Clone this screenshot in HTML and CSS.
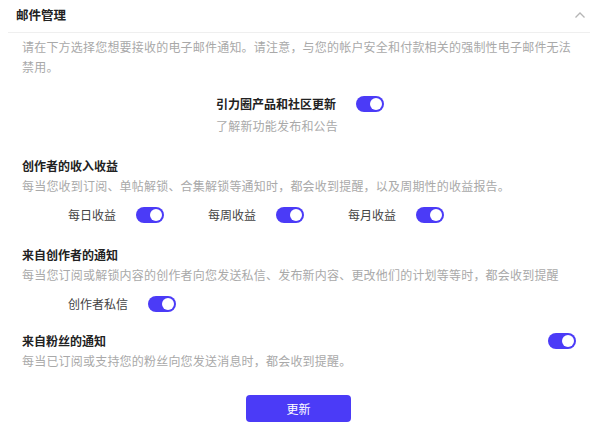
FILE: index.html
```html
<!DOCTYPE html>
<html lang="zh-CN">
<head>
  <meta charset="UTF-8" />
  <title>邮件管理</title>
  <link rel="stylesheet" href="styles.css">
</head>
<body>
  <div class="panel">
    <div class="panel-head">
      <span class="panel-title">邮件管理</span>
      <svg class="chevron" width="12" height="8" viewBox="0 0 12 8">
        <path d="M1.5 6.5 L6 2 L10.5 6.5" fill="none" stroke="#b5b5b5" stroke-width="1.3"/>
      </svg>
    </div>

    <div class="panel-body">
      <p class="desc intro">请在下方选择您想要接收的电子邮件通知。请注意，与您的帐户安全和付款相关的强制性电子邮件无法禁用。</p>

      <div class="featured">
        <div class="featured-text">
          <div class="heading">引力圈产品和社区更新</div>
          <div class="desc">了解新功能发布和公告</div>
        </div>
        <span class="switch on"><span class="knob"></span></span>
      </div>

      <div class="section">
        <div class="heading">创作者的收入收益</div>
        <p class="desc">每当您收到订阅、单帖解锁、合集解锁等通知时，都会收到提醒，以及周期性的收益报告。</p>
        <div class="options">
          <label class="option">每日收益 <span class="switch on"><span class="knob"></span></span></label>
          <label class="option">每周收益 <span class="switch on"><span class="knob"></span></span></label>
          <label class="option">每月收益 <span class="switch on"><span class="knob"></span></span></label>
        </div>
      </div>

      <div class="section">
        <div class="heading">来自创作者的通知</div>
        <p class="desc">每当您订阅或解锁内容的创作者向您发送私信、发布新内容、更改他们的计划等等时，都会收到提醒</p>
        <div class="options">
          <label class="option">创作者私信 <span class="switch on"><span class="knob"></span></span></label>
        </div>
      </div>

      <div class="section last">
        <div class="heading-row">
          <div class="heading">来自粉丝的通知</div>
          <span class="switch on"><span class="knob"></span></span>
        </div>
        <p class="desc">每当已订阅或支持您的粉丝向您发送消息时，都会收到提醒。</p>
      </div>

      <div class="actions">
        <button class="update-btn">更新</button>
      </div>
    </div>
  </div>
</body>
</html>
```

FILE: styles.css
```css
body {
  margin: 0;
  background: #fff;
  font-family: "Noto Sans CJK SC", "Noto Sans", sans-serif;
  font-size: 12px;
  color: #222;
}
p {
  margin: 0;
}
.panel {
  width: 600px;
}
.panel-head {
  margin: 0 10px 0 8px;
  height: 33px;
  border-bottom: 1px solid #efefef;
  display: flex;
  align-items: center;
  justify-content: space-between;
  padding: 0 4px 3px 8px;
  box-sizing: border-box;
}
.panel-title {
  font-weight: bold;
  font-size: 12.5px;
  line-height: 20px;
}
.chevron {
  display: block;
}
.panel-body {
  padding: 4px 24px 0 22px;
}
.desc {
  color: #a9a9a9;
  line-height: 20px;
  letter-spacing: 0.2px;
}
.intro {
  padding-right: 4px;
}
.heading {
  font-weight: bold;
  line-height: 20px;
}
.featured {
  margin-top: 17px;
  display: flex;
  justify-content: center;
  align-items: flex-start;
  gap: 18px;
  padding-left: 2px;
}
.featured .desc {
  margin-top: 2px;
}
.featured .switch {
  margin-top: 2px;
}
.section {
  margin-top: 20px;
}
.section.last {
  margin-top: 17px;
}
.heading-row {
  display: flex;
  justify-content: space-between;
  align-items: center;
}
.options {
  margin-top: 9px;
  padding-left: 46px;
  display: flex;
  gap: 44px;
}
.option {
  display: flex;
  align-items: center;
  gap: 20px;
  line-height: 20px;
  color: #444;
}
.switch {
  width: 28px;
  height: 16px;
  border-radius: 8px;
  background: #4b3bf7;
  display: flex;
  align-items: center;
  padding: 0 2px;
  box-sizing: border-box;
  flex-shrink: 0;
}
.switch.on {
  justify-content: flex-end;
}
.knob {
  width: 12px;
  height: 12px;
  border-radius: 50%;
  background: #fff;
}
.actions {
  margin-top: 24px;
  display: flex;
  justify-content: center;
  padding-right: 1px;
}
.update-btn {
  width: 105px;
  height: 27px;
  border: none;
  border-radius: 4px;
  background: #4b3bf7;
  color: #fff;
  font-family: inherit;
  font-size: 12px;
  cursor: pointer;
}
```
